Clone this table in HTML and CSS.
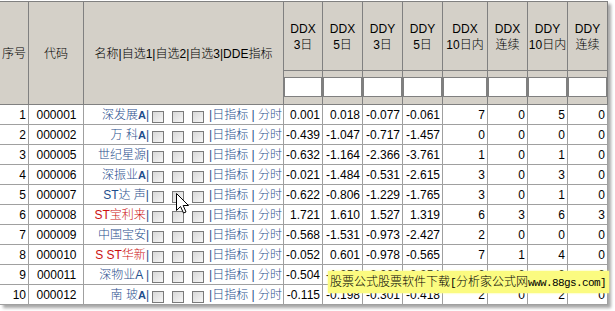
FILE: index.html
```html
<!DOCTYPE html>
<html lang="zh">
<head>
<meta charset="utf-8">
<link rel="stylesheet" href="styles.css">
</head>
<body>
<div class="sheet">
  <div class="h span">序号</div>
  <div class="h span">代码</div>
  <div class="h span">名称|自选1|自选2|自选3|DDE指标</div>
  <div class="h">DDX<br>3日</div>
  <div class="h">DDX<br>5日</div>
  <div class="h">DDY<br>3日</div>
  <div class="h">DDY<br>5日</div>
  <div class="h">DDX<br>10日内</div>
  <div class="h">DDX<br>连续</div>
  <div class="h">DDY<br>10日内</div>
  <div class="h">DDY<br>连续</div>
  <div class="hi"><div class="box"></div></div>
  <div class="hi"><div class="box"></div></div>
  <div class="hi"><div class="box"></div></div>
  <div class="hi"><div class="box"></div></div>
  <div class="hi"><div class="box"></div></div>
  <div class="hi"><div class="box"></div></div>
  <div class="hi"><div class="box"></div></div>
  <div class="hi"><div class="box"></div></div>

  <div class="d">1</div><div class="d code">000001</div>
  <div class="d nmc"><span class="nm">深发展<b>A</b>|</span><span class="cb"></span><span class="cb"></span><span class="cb"></span><span class="lks">|日指标 | 分时</span></div>
  <div class="d">0.001</div><div class="d">0.018</div><div class="d">-0.077</div><div class="d">-0.061</div><div class="d">7</div><div class="d">0</div><div class="d">5</div><div class="d">0</div>

  <div class="d">2</div><div class="d code">000002</div>
  <div class="d nmc"><span class="nm">万 科<b>A</b>|</span><span class="cb"></span><span class="cb"></span><span class="cb"></span><span class="lks">|日指标 | 分时</span></div>
  <div class="d">-0.439</div><div class="d">-1.047</div><div class="d">-0.717</div><div class="d">-1.457</div><div class="d">0</div><div class="d">0</div><div class="d">0</div><div class="d">0</div>

  <div class="d">3</div><div class="d code">000005</div>
  <div class="d nmc"><span class="nm">世纪星源|</span><span class="cb"></span><span class="cb"></span><span class="cb"></span><span class="lks">|日指标 | 分时</span></div>
  <div class="d">-0.632</div><div class="d">-1.164</div><div class="d">-2.366</div><div class="d">-3.761</div><div class="d">1</div><div class="d">0</div><div class="d">1</div><div class="d">0</div>

  <div class="d">4</div><div class="d code">000006</div>
  <div class="d nmc"><span class="nm">深振业<b>A</b>|</span><span class="cb"></span><span class="cb"></span><span class="cb"></span><span class="lks">|日指标 | 分时</span></div>
  <div class="d">-0.021</div><div class="d">-1.484</div><div class="d">-0.531</div><div class="d">-2.615</div><div class="d">3</div><div class="d">0</div><div class="d">3</div><div class="d">0</div>

  <div class="d">5</div><div class="d code">000007</div>
  <div class="d nmc"><span class="nm">ST达 声|</span><span class="cb"></span><span class="cb"></span><span class="cb"></span><span class="lks">|日指标 | 分时</span></div>
  <div class="d">-0.622</div><div class="d">-0.806</div><div class="d">-1.229</div><div class="d">-1.765</div><div class="d">3</div><div class="d">0</div><div class="d">1</div><div class="d">0</div>

  <div class="d">6</div><div class="d code">000008</div>
  <div class="d nmc"><span class="nm"><span class="red">ST宝利来</span>|</span><span class="cb"></span><span class="cb"></span><span class="cb"></span><span class="lks">|日指标 | 分时</span></div>
  <div class="d">1.721</div><div class="d">1.610</div><div class="d">1.527</div><div class="d">1.319</div><div class="d">6</div><div class="d">3</div><div class="d">6</div><div class="d">3</div>

  <div class="d">7</div><div class="d code">000009</div>
  <div class="d nmc"><span class="nm">中国宝安|</span><span class="cb"></span><span class="cb"></span><span class="cb"></span><span class="lks">|日指标 | 分时</span></div>
  <div class="d">-0.568</div><div class="d">-1.531</div><div class="d">-0.973</div><div class="d">-2.427</div><div class="d">2</div><div class="d">0</div><div class="d">0</div><div class="d">0</div>

  <div class="d">8</div><div class="d code">000010</div>
  <div class="d nmc"><span class="nm"><span class="red">S ST华新</span>|</span><span class="cb"></span><span class="cb"></span><span class="cb"></span><span class="lks">|日指标 | 分时</span></div>
  <div class="d">-0.052</div><div class="d">0.601</div><div class="d">-0.978</div><div class="d">-0.565</div><div class="d">7</div><div class="d">1</div><div class="d">4</div><div class="d">0</div>

  <div class="d">9</div><div class="d code">000011</div>
  <div class="d nmc"><span class="nm">深物业A |</span><span class="cb"></span><span class="cb"></span><span class="cb"></span><span class="lks">|日指标 | 分时</span></div>
  <div class="d">-0.504</div><div class="d">-1.256</div><div class="d">-2.009</div><div class="d">-0.254</div><div class="d">0</div><div class="d">0</div><div class="d">0</div><div class="d">0</div>

  <div class="d">10</div><div class="d code">000012</div>
  <div class="d nmc"><span class="nm">南 玻<b>A</b>|</span><span class="cb"></span><span class="cb"></span><span class="cb"></span><span class="lks">|日指标 | 分时</span></div>
  <div class="d">-0.115</div><div class="d">-0.198</div><div class="d">-0.301</div><div class="d">-0.418</div><div class="d">2</div><div class="d">0</div><div class="d">2</div><div class="d">0</div>
</div>

<div class="tip">股票公式股票软件下载<span class="mono">[</span>分析家公式网<span class="mono">www.88gs.com]</span></div>

<svg class="cursor" width="13" height="21" viewBox="0 0 13 21"><path d="M0.5 0.5V17.5L4.5 13.5L7.5 20L10 19L7.2 12.5H12.5Z" fill="#fff" stroke="#000" stroke-linejoin="miter"/></svg>
</body>
</html>
```

FILE: styles.css
```css
* { box-sizing: border-box; }

body {
  margin: 0;
  width: 615px;
  height: 311px;
  overflow: hidden;
  position: relative;
  background: #fff;
  color: #000;
  font: 300 12px "Liberation Sans", "Noto Sans CJK SC", sans-serif;
}

.sheet {
  display: grid;
  grid-template-columns: 29px 55px 200px 39px 40px 40px 40px 45px 40px 40px 40px;
  grid-template-rows: 69px 34px repeat(10, 20px);
  width: 608px;
  margin-top: 1px;
  border-top: 1px solid #808080;
  box-shadow: 3px 3px 3px rgba(0, 0, 0, 0.35);
}

.h {
  background: #d4d0c8;
  border-right: 1px solid #808080;
  border-bottom: 1px solid #808080;
  display: flex;
  align-items: center;
  justify-content: center;
  text-align: center;
  line-height: 16px;
  padding-top: 1px;
  white-space: nowrap;
}

.h.span { grid-row: span 2; }

.hi {
  background: #d4d0c8;
  border-right: 1px solid #808080;
  border-bottom: 1px solid #808080;
  padding: 6px 0 0 0;
}

.hi .box {
  height: 20px;
  background: #fff;
  border: 1px solid #808080;
}

.d {
  border-right: 1px solid #a0a0a0;
  border-bottom: 1px solid #a0a0a0;
  text-align: right;
  padding: 1px 2px 0 0;
  line-height: 19px;
  white-space: nowrap;
  background: #fff;
}

.d.code {
  text-align: center;
  padding-right: 0;
  padding-left: 1px;
}

.d.nmc {
  display: flex;
  align-items: center;
  padding: 2px 0 0 0;
  color: #1f4e8c;
}

.nm {
  width: 65px;
  flex: none;
  text-align: right;
}

.nm b { font-size: 11px; font-weight: bold; }

.red { color: #cc1111; }

.cb {
  flex: none;
  width: 12px;
  height: 12px;
  margin-left: 8px;
  align-self: flex-end;
  margin-bottom: 1px;
  border: 1px solid #7a7a7a;
  background: linear-gradient(135deg, #d8d8d8, #f6f6f6);
}

.nm + .cb { margin-left: 3px; }

.lks {
  margin-left: auto;
  padding-right: 1px;
}

.tip {
  position: absolute;
  left: 328px;
  top: 271px;
  width: 281px;
  height: 22px;
  padding-left: 2px;
  line-height: 22px;
  background: #fbfb80;
  box-shadow: 0 0 2px #fbfb80;
  white-space: nowrap;
  font-size: 12px;
}

.tip .mono {
  font-family: "Liberation Mono", monospace;
  font-size: 11px;
  font-weight: 400;
  letter-spacing: -0.6px;
}

.cursor {
  position: absolute;
  left: 176px;
  top: 193px;
}
```
